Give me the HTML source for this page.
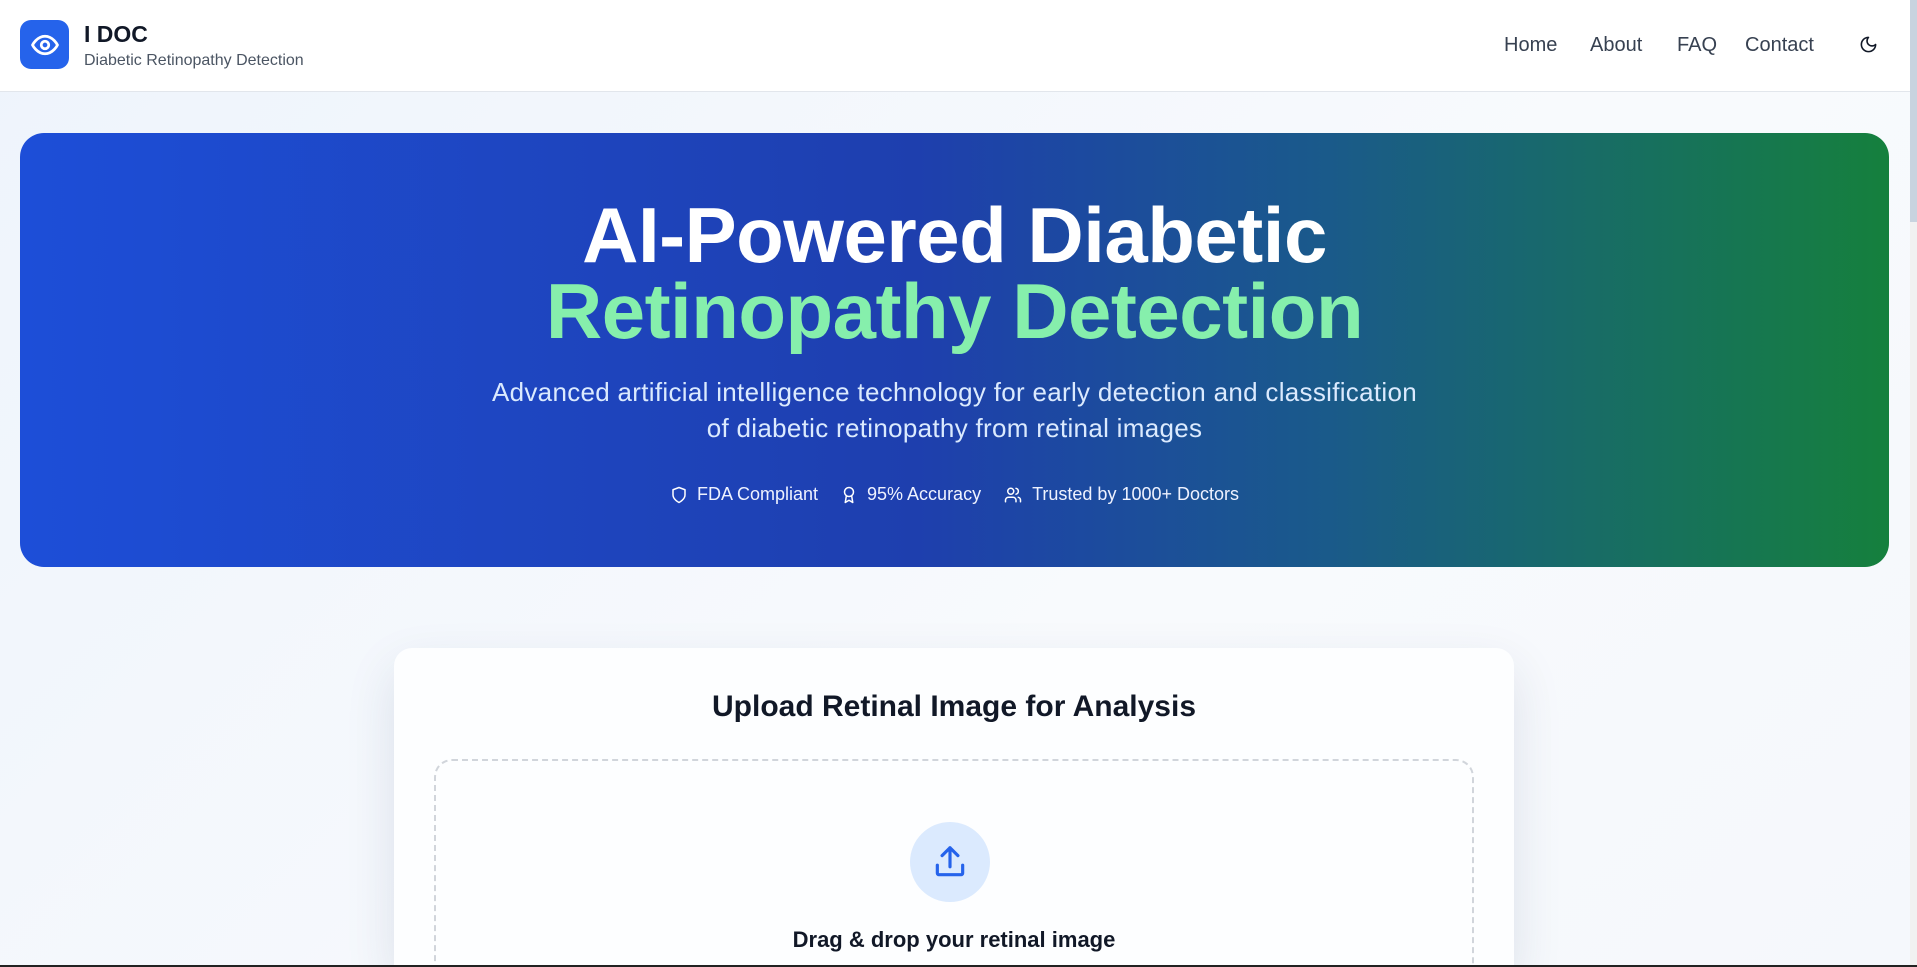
<!DOCTYPE html>
<html><head><meta charset="utf-8"><style>
*{box-sizing:border-box;margin:0;padding:0}
html,body{width:1917px;height:967px;overflow:hidden}
body{font-family:"Liberation Sans",sans-serif;background:linear-gradient(135deg,#eef4fc,#f8fafd 60%,#f5f8fc);position:relative}
header{position:absolute;left:0;top:0;width:1910px;height:92px;background:#fff;border-bottom:1px solid #e2e6ec}
.logo{position:absolute;left:20px;top:20px;width:49px;height:49px;border-radius:11px;background:#2563eb;display:flex;align-items:center;justify-content:center}
.brand{position:absolute;left:84px;top:21px;font-size:23px;font-weight:700;color:#111827}
.sub{position:absolute;left:84px;top:52px;font-size:16px;color:#4b5563}
nav{position:absolute;top:34px;font-size:20px;color:#374151}
.sb{position:absolute;right:0;top:0;width:7px;height:967px;background:#f1f1f1}
.sb div{position:absolute;left:0;top:0;width:7px;height:222px;background:#c8d3df}
.hero{position:absolute;left:20px;top:133px;width:1869px;height:434px;border-radius:24px;background:linear-gradient(90deg,#1d4ed8 0%,#1e3fae 48%,#1a5a8a 70%,#15803d 100%);text-align:center;color:#fff;overflow:hidden}
h1{position:absolute;left:0;right:0;top:64px;font-size:78px;line-height:76px;font-weight:700;letter-spacing:-0.5px}
h1 span{color:#86efac}
.p{position:absolute;left:0;right:0;top:241px;font-size:26px;line-height:36px;color:#dbeafe;letter-spacing:0.3px}
.badges{position:absolute;left:0;right:0;top:351px;font-size:18px;color:#eef2ff;display:flex;justify-content:center;gap:22px;align-items:center}
.badges span{display:flex;align-items:center;gap:9px}
.card{position:absolute;left:394px;top:648px;width:1120px;height:319px;background:#fdfeff;border-radius:18px 18px 0 0;box-shadow:0 20px 50px rgba(30,50,90,.12);overflow:hidden}
.card h2{position:absolute;left:0;right:0;top:42px;text-align:center;font-size:30px;font-weight:700;color:#111827}
.drop{position:absolute;left:40px;top:111px;width:1040px;height:400px;border:2px dashed #d1d5db;border-radius:18px}
.circ{position:absolute;left:474px;top:61px;width:80px;height:80px;border-radius:50%;background:#dbeafe;display:flex;align-items:center;justify-content:center}
.drag{position:absolute;left:0;right:0;top:166px;text-align:center;font-size:22px;font-weight:700;color:#111827}
.bot{position:absolute;left:0;top:965px;width:1917px;height:2px;background:#222}
</style></head><body>
<header>
<div class="logo"><svg width="30" height="30" viewBox="0 0 24 24" fill="none" stroke="#fff" stroke-width="2.2" stroke-linecap="round" stroke-linejoin="round"><path d="M2 12s3.5-7 10-7 10 7 10 7-3.5 7-10 7S2 12 2 12z"/><circle cx="12" cy="12" r="3"/></svg></div>
<div class="brand">I DOC</div>
<div class="sub">Diabetic Retinopathy Detection</div>
<nav style="left:1504px">Home</nav><nav style="left:1590px">About</nav><nav style="left:1677px">FAQ</nav><nav style="left:1745px">Contact</nav>
<svg style="position:absolute;left:1859px;top:35px" width="19" height="19" viewBox="0 0 24 24" fill="none" stroke="#111827" stroke-width="2" stroke-linecap="round" stroke-linejoin="round"><path d="M12 3a6 6 0 0 0 9 9 9 9 0 1 1-9-9z"/></svg>
</header>
<div class="sb"><div></div></div>
<div class="hero">
<h1>AI-Powered Diabetic<br><span>Retinopathy Detection</span></h1>
<div class="p">Advanced artificial intelligence technology for early detection and classification<br>of diabetic retinopathy from retinal images</div>
<div class="badges">
<span><svg width="18" height="18" viewBox="0 0 24 24" fill="none" stroke="#fff" stroke-width="2" stroke-linejoin="round"><path d="M12 22s8-4 8-10V5l-8-3-8 3v7c0 6 8 10 8 10z"/></svg>FDA Compliant</span>
<span><svg width="18" height="18" viewBox="0 0 24 24" fill="none" stroke="#fff" stroke-width="2" stroke-linejoin="round"><circle cx="12" cy="8" r="6"/><path d="M15.5 13l1.5 9-5-3-5 3 1.5-9"/></svg>95% Accuracy</span>
<span><svg width="20" height="18" viewBox="0 0 24 24" fill="none" stroke="#fff" stroke-width="2" stroke-linecap="round"><path d="M16 21v-2a4 4 0 0 0-4-4H6a4 4 0 0 0-4 4v2"/><circle cx="9" cy="7" r="4"/><path d="M22 21v-2a4 4 0 0 0-3-3.9M16 3.1a4 4 0 0 1 0 7.8"/></svg>Trusted by 1000+ Doctors</span>
</div>
</div>
<div class="card">
<h2>Upload Retinal Image for Analysis</h2>
<div class="drop">
<div class="circ"><svg width="38" height="38" viewBox="0 0 24 24" fill="none" stroke="#2563eb" stroke-width="2" stroke-linecap="round" stroke-linejoin="round"><path d="M4 14v5a1 1 0 0 0 1 1h14a1 1 0 0 0 1-1v-5"/><path d="M12 15V3M7 8l5-5 5 5"/></svg></div>
<div class="drag">Drag &amp; drop your retinal image</div>
</div>
</div>
<div class="bot"></div>
</body></html>
